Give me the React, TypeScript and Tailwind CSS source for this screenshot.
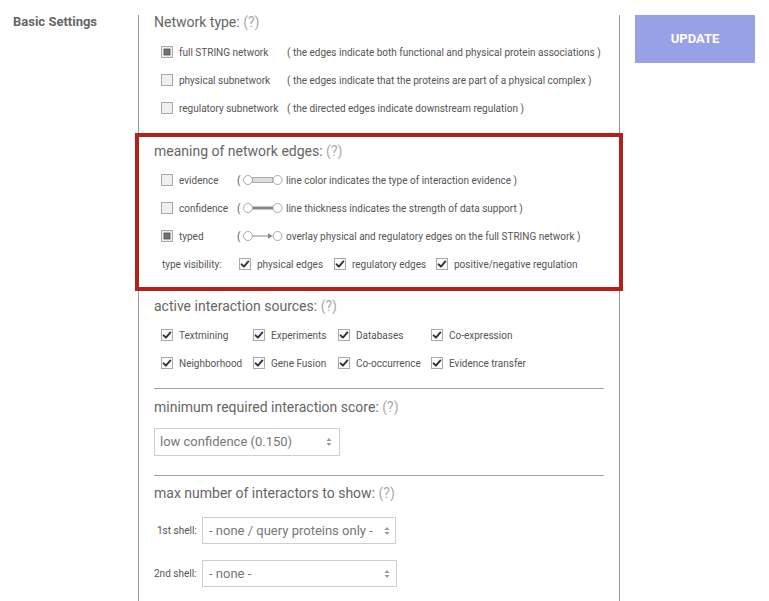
import React from "react";

const font = { fontFamily: "Roboto, 'Liberation Sans', sans-serif" };

function Box({ state }: { state: "off" | "on" | "check" }) {
  return (
    <svg width="12" height="12" viewBox="0 0 12 12" className="shrink-0">
      <rect x="0.5" y="0.5" width="11" height="11" fill={state === "check" ? "#fbfbfb" : "#efefef"} stroke="#a9a9a9" />
      {state === "on" && <rect x="3" y="3" width="6" height="6" fill="#707070" stroke="#555" strokeWidth="0.8" />}
      {state === "check" && (
        <path d="M2.6 6.3 L4.9 8.6 L9.4 3.4" fill="none" stroke="#333" strokeWidth="1.9" strokeLinecap="round" strokeLinejoin="round" />
      )}
    </svg>
  );
}

function Heading({ children }: { children: React.ReactNode }) {
  return (
    <div className="h-[14px] leading-[14px] text-[14px] text-[#666] whitespace-nowrap">
      {children} <span className="text-[#aaa]">(?)</span>
    </div>
  );
}

function EdgeIcon({ kind }: { kind: "evidence" | "confidence" | "typed" }) {
  return (
    <svg width="40" height="12" viewBox="0 0 40 12" className="shrink-0">
      {kind === "evidence" && <rect x="9.5" y="3.5" width="20" height="5" fill="#ddd" stroke="#aaa" />}
      {kind === "confidence" && <line x1="9" y1="6" x2="31" y2="6" stroke="#888" strokeWidth="3" />}
      {kind === "typed" && (
        <>
          <line x1="9" y1="6" x2="27" y2="6" stroke="#888" strokeWidth="1" />
          <path d="M25 3.3 L29.5 6 L25 8.7 Z" fill="#888" />
        </>
      )}
      <circle cx="5" cy="6" r="4.5" fill="#fff" stroke="#aaa" />
      <circle cx="34.5" cy="6" r="4.5" fill="#fff" stroke="#aaa" />
    </svg>
  );
}

function Arrows() {
  return (
    <svg width="6" height="10" viewBox="0 0 6 10" className="shrink-0">
      <path d="M3 1 L5.5 4 L0.5 4 Z" fill="#999" />
      <path d="M3 9 L5.5 6 L0.5 6 Z" fill="#999" />
    </svg>
  );
}

function Check({ label, state = "check" }: { label: string; state?: "off" | "on" | "check" }) {
  return (
    <div className="flex items-center gap-[6px] h-[28px] text-[10px] text-[#555] whitespace-nowrap">
      <Box state={state} />
      <span>{label}</span>
    </div>
  );
}

export default function App() {
  const networkRows: [string, string, "on" | "off"][] = [
    ["full STRING network", "( the edges indicate both functional and physical protein associations )", "on"],
    ["physical subnetwork", "( the edges indicate that the proteins are part of a physical complex )", "off"],
    ["regulatory subnetwork", "( the directed edges indicate downstream regulation )", "off"],
  ];
  const edgeRows: [string, "evidence" | "confidence" | "typed", string, "on" | "off"][] = [
    ["evidence", "evidence", "line color indicates the type of interaction evidence )", "off"],
    ["confidence", "confidence", "line thickness indicates the strength of data support )", "off"],
    ["typed", "typed", "overlay physical and regulatory edges on the full STRING network )", "on"],
  ];
  return (
    <div className="w-[769px] h-[601px] bg-white overflow-hidden flex pt-[15px]" style={font}>
      <div className="w-[138px] shrink-0 pl-[13px]">
        <div className="h-[14px] leading-[14px] text-[13px] font-bold text-[#666]">Basic Settings</div>
      </div>
      <div className="w-[482px] shrink-0 border-l border-r border-[#9a9a9a] flex flex-col">
        <div className="px-[15px]">
          <Heading>Network type:</Heading>
          <div className="mt-[9px]">
            {networkRows.map(([l, d, s]) => (
              <div key={l} className="flex items-center h-[28px] pl-[7px] text-[10px] text-[#555] whitespace-nowrap">
                <Box state={s} />
                <span className="ml-[6px] w-[108px]">{l}</span>
                <span>{d}</span>
              </div>
            ))}
          </div>
        </div>
        <div className="relative mt-[11px] -mx-[4px] border-[4px] border-[#b32119] pl-[15px] pr-[10px] pt-[7px] pb-[9px]">
          <Heading>meaning of network edges:</Heading>
          <div className="mt-[8px]">
            {edgeRows.map(([l, k, d, s]) => (
              <div key={l} className="flex items-center h-[28px] pl-[7px] text-[10px] text-[#555] whitespace-nowrap">
                <Box state={s} />
                <span className="ml-[6px] w-[58px]">{l}</span>
                <span className="w-[6px]">(</span>
                <EdgeIcon kind={k} />
                <span className="ml-[3px]">{d}</span>
              </div>
            ))}
            <div className="flex items-center h-[28px] pl-[8px] text-[10px] text-[#555] whitespace-nowrap">
              <span className="w-[77px]">type visibility:</span>
              <div className="w-[95px]"><Check label="physical edges" /></div>
              <div className="w-[102px]"><Check label="regulatory edges" /></div>
              <Check label="positive/negative regulation" />
            </div>
          </div>
        </div>
        <div className="px-[15px]">
          <div className="mt-[8px]"><Heading>active interaction sources:</Heading></div>
          <div className="mt-[8px] pl-[7px] grid grid-cols-[92px_85px_93px_auto]">
            <Check label="Textmining" />
            <Check label="Experiments" />
            <Check label="Databases" />
            <Check label="Co-expression" />
            <Check label="Neighborhood" />
            <Check label="Gene Fusion" />
            <Check label="Co-occurrence" />
            <Check label="Evidence transfer" />
          </div>
          <div className="mt-[11px] h-px bg-[#a0a0a0]" />
          <div className="mt-[11px]"><Heading>minimum required interaction score:</Heading></div>
          <div className="mt-[14px] w-[186px] h-[28px] border border-[#cfcfcf] flex items-center justify-between pl-[5px] pr-[7px] text-[13px] text-[#777] whitespace-nowrap">
            <span>low confidence (0.150)</span>
            <Arrows />
          </div>
          <div className="mt-[19px] h-px bg-[#a0a0a0]" />
          <div className="mt-[10px]"><Heading>max number of interactors to show:</Heading></div>
          <div className="mt-[17px] flex items-center">
            <span className="w-[48px] pl-[3px] text-[10px] text-[#555] whitespace-nowrap">1st shell:</span>
            <div className="w-[194px] h-[27px] border border-[#cfcfcf] flex items-center justify-between pl-[6px] pr-[5px] text-[13px] text-[#777] whitespace-nowrap">
              <span>- none / query proteins only -</span>
              <Arrows />
            </div>
          </div>
          <div className="mt-[16px] flex items-center">
            <span className="w-[48px] text-[10px] text-[#555] whitespace-nowrap">2nd shell:</span>
            <div className="w-[195px] h-[27px] border border-[#cfcfcf] flex items-center justify-between pl-[6px] pr-[6px] text-[13px] text-[#777] whitespace-nowrap">
              <span>- none -</span>
              <Arrows />
            </div>
          </div>
        </div>
      </div>
      <div className="pl-[15px]">
        <div className="w-[120px] h-[48px] bg-[#99a1e6] flex items-center justify-center text-white font-bold text-[13px]">
          UPDATE
        </div>
      </div>
    </div>
  );
}
